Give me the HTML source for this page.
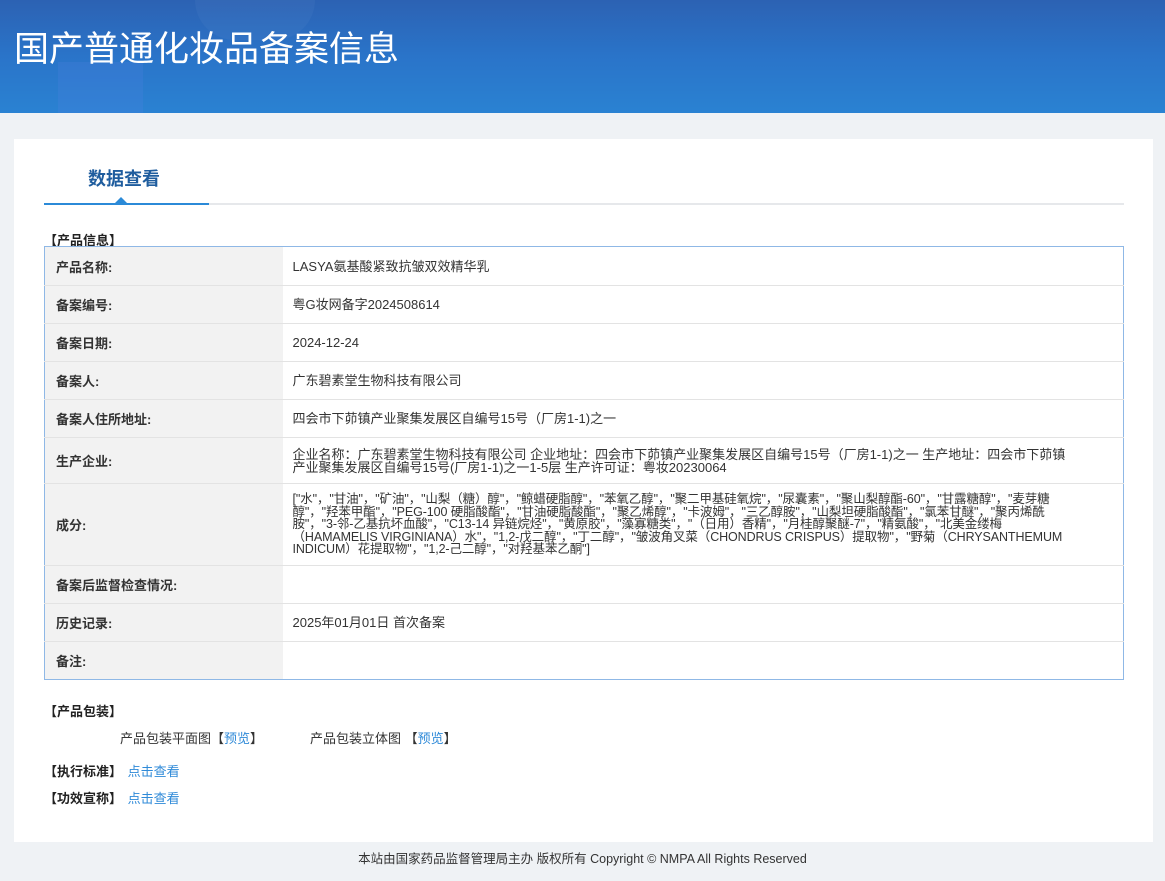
<!DOCTYPE html>
<html><head><meta charset="utf-8"><style>
*{margin:0;padding:0;box-sizing:border-box}
body{width:1165px;height:881px;background:#eff2f5;font-family:"Liberation Sans","Noto Sans CJK SC",sans-serif;color:#333;font-size:13px;position:relative;overflow:hidden}
.hdr{position:absolute;left:0;top:0;width:1165px;height:113px;background:linear-gradient(180deg,#2c62b3 0%,#2a74c9 50%,#2a82d2 100%);overflow:hidden}
.hdr h1{position:absolute;left:14px;top:21px;font-size:35px;font-weight:normal;color:#fff;font-family:"Noto Sans CJK SC",sans-serif}
.deco1{position:absolute;left:58px;top:62px;width:85px;height:55px;background:rgba(90,130,230,.2)}
.deco2{position:absolute;left:195px;top:-40px;width:120px;height:80px;border-radius:40px;background:rgba(120,160,220,.1)}
.card{position:absolute;left:14px;top:139px;width:1139px;height:703px;background:#fff}
.tab{position:absolute;left:74px;top:26px;font-size:18px;font-weight:bold;color:#1f5d9e}
.line{position:absolute;left:30px;top:64px;width:1080px;height:2px;background:#e6e8eb}
.line2{position:absolute;left:30px;top:64px;width:165px;height:2px;background:#2b8ad8}
.tri{position:absolute;left:101px;top:58px;width:0;height:0;border-left:6px solid transparent;border-right:6px solid transparent;border-bottom:6px solid #2b8ad8}
.sec{position:absolute;left:30px;font-weight:bold;color:#222;font-size:13px}
table{position:absolute;left:30px;top:107px;width:1080px;border-collapse:collapse;border:1px solid #8fb8e6}
td{border-bottom:1px solid #e3e3e3;vertical-align:middle;font-size:13px}
td.l{width:238px;background:#f2f2f2;font-weight:bold;padding-left:11px;color:#333}
td.v{padding-left:10px;padding-right:50px;color:#333;line-height:13px}
td.ing{font-size:12.5px;line-height:12.5px;letter-spacing:-.1px}
a{color:#2f8ad8;text-decoration:none}
.foot{position:absolute;left:0;top:848px;width:1165px;text-align:center;font-size:12.5px;color:#333}
</style></head><body>
<div class="hdr"><div class="deco2"></div><div class="deco1"></div><h1>国产普通化妆品备案信息</h1></div>
<div class="card">
<div class="tab">数据查看</div>
<div class="line"></div><div class="line2"></div><div class="tri"></div>
<div class="sec" style="top:91px">【产品信息】</div>
<table>
<tr style="height:39px"><td class="l">产品名称:</td><td class="v">LASYA氨基酸紧致抗皱双效精华乳</td></tr>
<tr style="height:38px"><td class="l">备案编号:</td><td class="v">粤G妆网备字2024508614</td></tr>
<tr style="height:38px"><td class="l">备案日期:</td><td class="v">2024-12-24</td></tr>
<tr style="height:38px"><td class="l">备案人:</td><td class="v">广东碧素堂生物科技有限公司</td></tr>
<tr style="height:38px"><td class="l">备案人住所地址:</td><td class="v">四会市下茆镇产业聚集发展区自编号15号（厂房1-1)之一</td></tr>
<tr style="height:46px"><td class="l">生产企业:</td><td class="v">企业名称：广东碧素堂生物科技有限公司 企业地址：四会市下茆镇产业聚集发展区自编号15号（厂房1-1)之一 生产地址：四会市下茆镇产业聚集发展区自编号15号(厂房1-1)之一1-5层 生产许可证：粤妆20230064</td></tr>
<tr style="height:82px"><td class="l">成分:</td><td class="v ing">["水"，"甘油"，"矿油"，"山梨（糖）醇"，"鲸蜡硬脂醇"，"苯氧乙醇"，"聚二甲基硅氧烷"，"尿囊素"，"聚山梨醇酯-60"，"甘露糖醇"，"麦芽糖醇"，"羟苯甲酯"，"PEG-100 硬脂酸酯"，"甘油硬脂酸酯"，"聚乙烯醇"，"卡波姆"，"三乙醇胺"，"山梨坦硬脂酸酯"，"氯苯甘醚"，"聚丙烯酰胺"，"3-邻-乙基抗坏血酸"，"C13-14 异链烷烃"，"黄原胶"，"藻寡糖类"，"（日用）香精"，"月桂醇聚醚-7"，"精氨酸"，"北美金缕梅（HAMAMELIS VIRGINIANA）水"，"1,2-戊二醇"，"丁二醇"，"皱波角叉菜（CHONDRUS CRISPUS）提取物"，"野菊（CHRYSANTHEMUM INDICUM）花提取物"，"1,2-己二醇"，"对羟基苯乙酮"]</td></tr>
<tr style="height:38px"><td class="l">备案后监督检查情况:</td><td class="v"></td></tr>
<tr style="height:38px"><td class="l">历史记录:</td><td class="v">2025年01月01日 首次备案</td></tr>
<tr style="height:38px"><td class="l" style="border-bottom:none">备注:</td><td class="v" style="border-bottom:none"></td></tr>
</table>
<div class="sec" style="top:562px">【产品包装】</div>
<div style="position:absolute;left:106px;top:589px">产品包装平面图【<a>预览</a>】</div>
<div style="position:absolute;left:296px;top:589px">产品包装立体图 【<a>预览</a>】</div>
<div class="sec" style="top:622px">【执行标准】 <a style="font-weight:normal;margin-left:2px">点击查看</a></div>
<div class="sec" style="top:649px">【功效宣称】 <a style="font-weight:normal;margin-left:2px">点击查看</a></div>
</div>
<div class="foot">本站由国家药品监督管理局主办 版权所有 Copyright © NMPA All Rights Reserved</div>
</body></html>
